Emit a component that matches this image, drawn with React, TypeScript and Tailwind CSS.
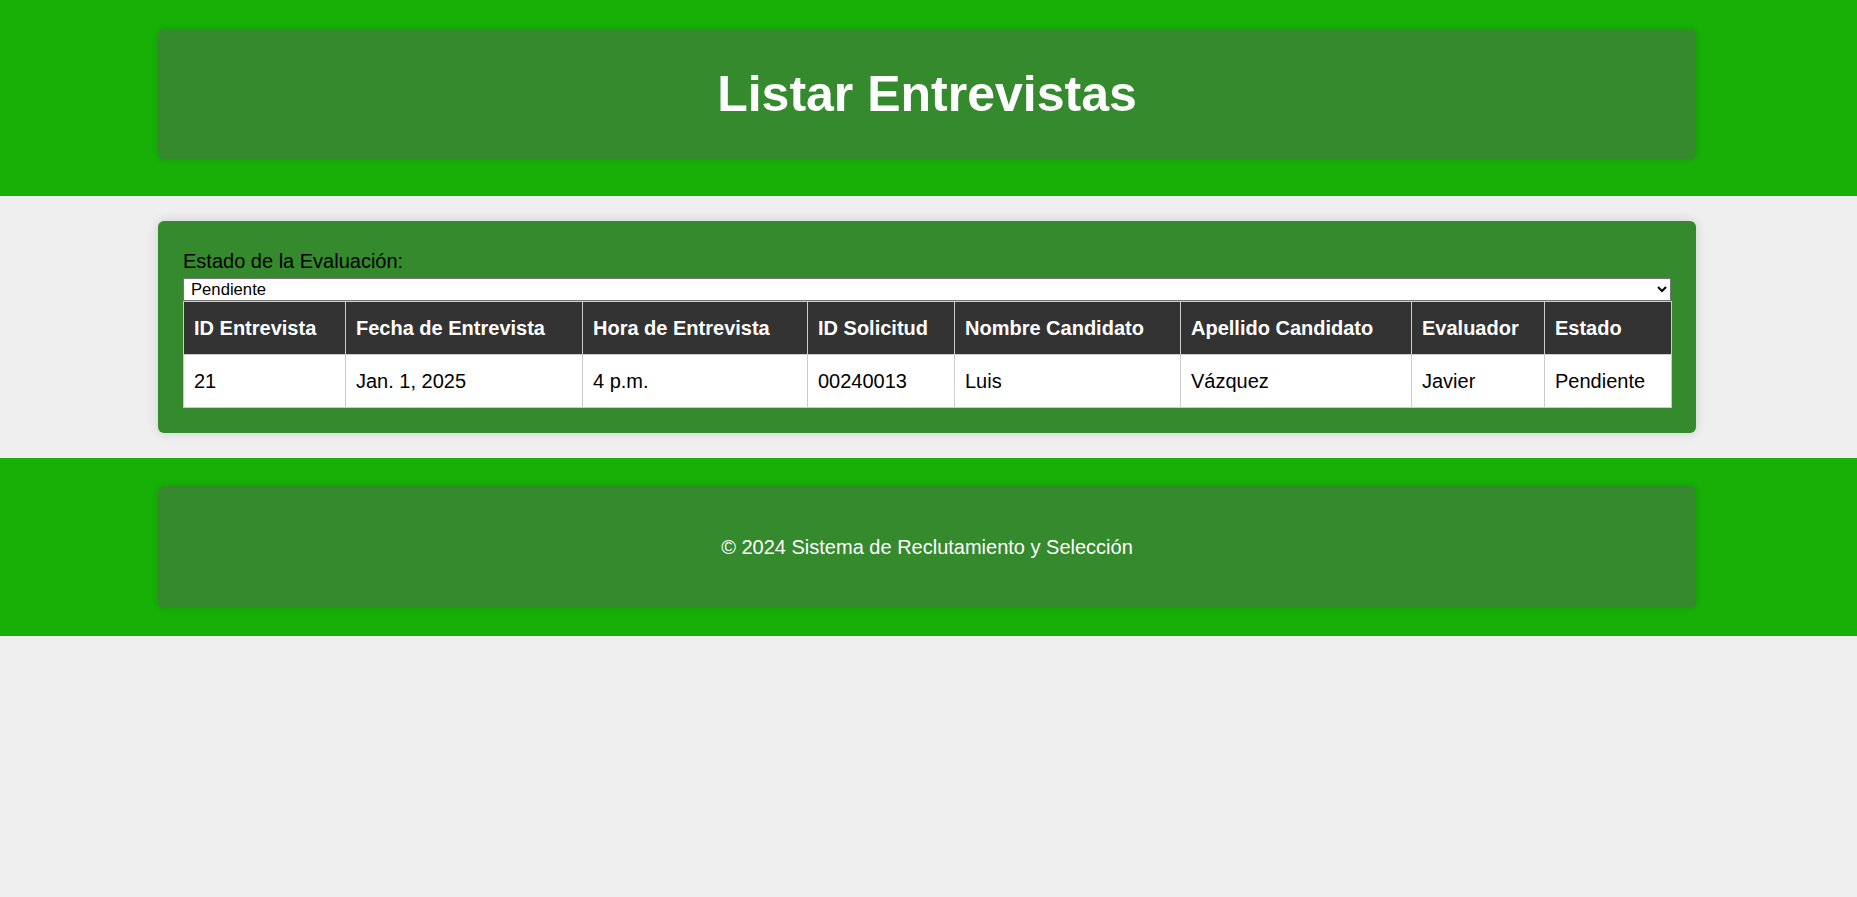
import { useState } from "react";

const columns = [
  { label: "ID Entrevista", width: "w-[162px]" },
  { label: "Fecha de Entrevista", width: "w-[237px]" },
  { label: "Hora de Entrevista", width: "w-[225px]" },
  { label: "ID Solicitud", width: "w-[147px]" },
  { label: "Nombre Candidato", width: "w-[226px]" },
  { label: "Apellido Candidato", width: "w-[231px]" },
  { label: "Evaluador", width: "w-[133px]" },
  { label: "Estado", width: "w-[127px]" },
];

const entrevistas = [
  ["21", "Jan. 1, 2025", "4 p.m.", "00240013", "Luis", "Vázquez", "Javier", "Pendiente"],
];

export default function App() {
  const [estado, setEstado] = useState("Pendiente");

  return (
    <div className="min-h-screen bg-[#efefef] font-['Liberation_Sans',Arial,sans-serif] text-black">
      <header className="bg-[#16b007] pt-[29px] pb-[37px]">
        <div className="ml-[158px] w-[1538px] h-[130px] rounded-[6px] bg-[#348a2c] shadow-[0_0_6px_rgba(0,0,0,0.12)] flex items-center justify-center">
          <h1 className="text-[50px] leading-[57px] font-bold text-white">Listar Entrevistas</h1>
        </div>
      </header>

      <main className="py-[25px]">
        <div className="ml-[158px] w-[1538px] rounded-[6px] bg-[#348a2c] px-[25px] pt-[25px] pb-[25px] shadow-[0_0_12px_rgba(0,0,0,0.14)]">
          <label htmlFor="estado" className="block mt-[4px] text-[20px] leading-[23px]">
            Estado de la Evaluación:
          </label>
          <select
            id="estado"
            value={estado}
            onChange={(e) => setEstado(e.target.value)}
            className="block mt-[5px] w-full h-[23px] bg-white border border-[#767676] text-[16.67px] leading-[19px] px-[3px] text-black"
          >
            <option>Pendiente</option>
            <option>Aprobado</option>
            <option>Rechazado</option>
          </select>

          <table className="w-full border-collapse table-fixed text-left">
            <thead>
              <tr className="bg-[#333333] text-white">
                {columns.map((col) => (
                  <th
                    key={col.label}
                    className={`${col.width} border border-[#cccccc] px-[10px] py-[14.5px] text-[20px] leading-[23px] font-bold`}
                  >
                    {col.label}
                  </th>
                ))}
              </tr>
            </thead>
            <tbody>
              {entrevistas.map((row) => (
                <tr key={row[0]} className="bg-white">
                  {row.map((cell, i) => (
                    <td
                      key={i}
                      className="border border-[#cccccc] px-[10px] py-[14.5px] text-[20px] leading-[23px]"
                    >
                      {cell}
                    </td>
                  ))}
                </tr>
              ))}
            </tbody>
          </table>
        </div>
      </main>

      <footer className="bg-[#16b007] py-[28px]">
        <div className="ml-[158px] w-[1538px] h-[122px] rounded-[6px] bg-[#348a2c] shadow-[0_0_6px_rgba(0,0,0,0.12)] flex items-center justify-center">
          <p className="text-[20px] leading-[23px] text-white">© 2024 Sistema de Reclutamiento y Selección</p>
        </div>
      </footer>
    </div>
  );
}
